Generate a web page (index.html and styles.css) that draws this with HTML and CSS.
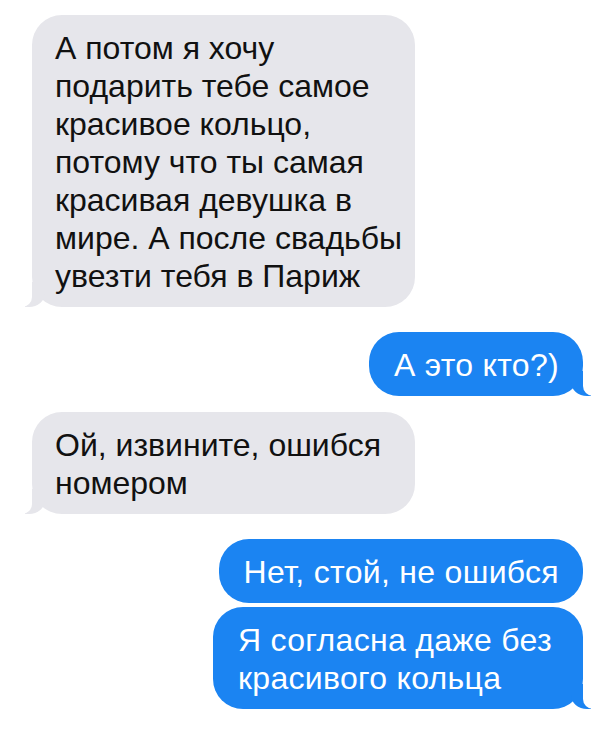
FILE: index.html
```html
<!DOCTYPE html>
<html>
<head>
    <title>Сообщения</title>
    <link rel="stylesheet" href="styles.css">
</head>
<body>
    <div class="chat">
        <div class="msg them">А потом я хочу подарить тебе самое красивое кольцо, потому что ты самая красивая девушка в мире. А после свадьбы увезти тебя в Париж</div>
        <div class="msg me">А это кто?)</div>
        <div class="msg them">Ой, извините, ошибся номером</div>
        <div class="msg me no-tail">Нет, стой, не ошибся</div>
        <div class="msg me wide">Я согласна даже без красивого кольца</div>
    </div>
</body>
</html>
```

FILE: styles.css
```css
body {
    margin: 0;
    padding: 0;
    background-color: #fff;
    font-family: 'Liberation Sans', Arial, sans-serif;
}

.chat {
    display: flex;
    flex-direction: column;
    padding: 15px 17px 0 32px;
}

.msg {
    position: relative;
    box-sizing: border-box;
    font-size: 32px;
    line-height: 38px;
    padding: 14px 24px 12px 24px;
    border-radius: 30px;
}

.them {
    align-self: flex-start;
    width: 383px;
    margin-top: 16px;
    padding-left: 23px;
    padding-right: 10px;
    background-color: #e6e6eb;
    color: #111;
}

.them:first-child {
    margin-top: 0;
}

.me {
    align-self: flex-end;
    margin-top: 25px;
    padding-left: 25px;
    letter-spacing: 0.3px;
    background-color: #1b84f2;
    color: #fff;
}

.msg.me + .msg.me {
    margin-top: 4px;
}

.me.wide {
    width: 370px;
}

/* bubble tails */
.them::before,
.me::before {
    content: "";
    position: absolute;
    bottom: 0;
    height: 25px;
}

.them::before {
    left: -7px;
    border-left: 20px solid #e6e6eb;
    border-bottom-right-radius: 16px 14px;
}

.them::after,
.me::after {
    content: "";
    position: absolute;
    bottom: 0;
    height: 25px;
    width: 26px;
    background-color: #fff;
}

.them::after {
    left: -26px;
    border-bottom-right-radius: 10px;
}

.me::before {
    right: -8px;
    border-right: 20px solid #1b84f2;
    border-bottom-left-radius: 16px 14px;
}

.me::after {
    right: -26px;
    border-bottom-left-radius: 10px;
}

.me.no-tail::before,
.me.no-tail::after {
    display: none;
}
```
